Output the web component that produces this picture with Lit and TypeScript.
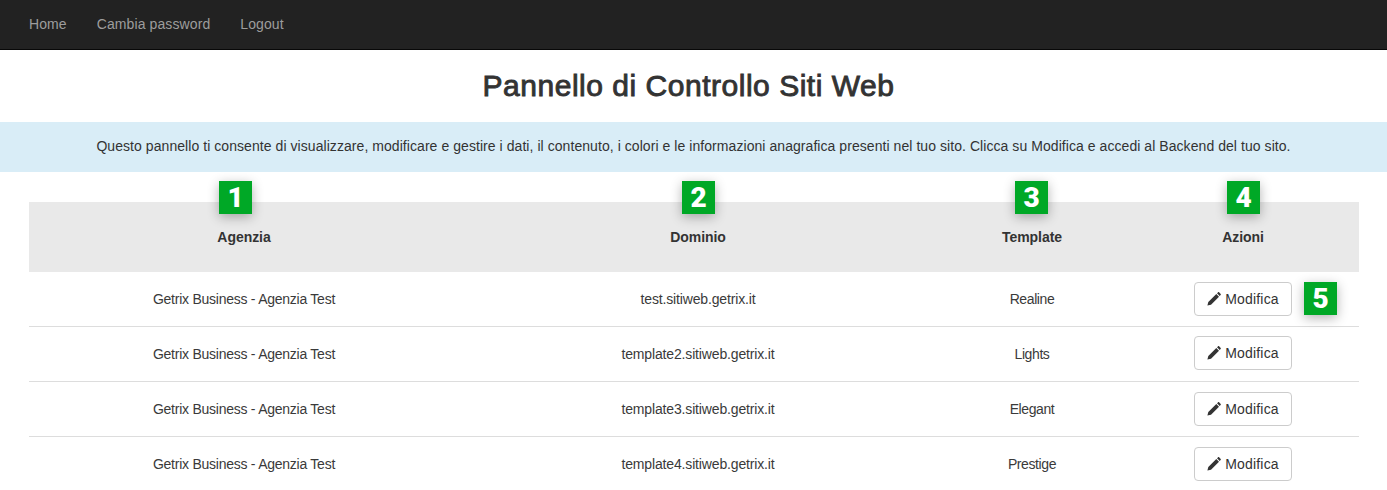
import { LitElement, html, css } from "lit";
import { customElement } from "lit/decorators.js";

const rows = [
  ["template-test", "test.sitiweb.getrix.it", "Realine"],
  ["template-2", "template2.sitiweb.getrix.it", "Lights"],
  ["template-3", "template3.sitiweb.getrix.it", "Elegant"],
  ["template-4", "template4.sitiweb.getrix.it", "Prestige"],
];

@customElement("app-root")
export class AppRoot extends LitElement {
  static styles = css`
    :host {
      display: block;
      height: 490px;
      overflow: hidden;
      background: #fff;
      color: #333;
      font-family: "Liberation Sans", Arial, sans-serif;
      font-size: 14px;
      line-height: 20px;
    }
    nav {
      display: flex;
      height: 49px;
      padding-left: 14px;
      background: #222;
      border-bottom: 1px solid #080808;
    }
    nav a {
      padding: 14px 15px 15px;
      color: #9d9d9d;
      text-decoration: none;
      letter-spacing: 0.1px;
    }
    h1 {
      margin: 0;
      padding: 20px 10px 0 0;
      height: 52px;
      line-height: 32px;
      font-size: 30px;
      font-weight: normal;
      -webkit-text-stroke: 0.9px #333;
      text-align: center;
      letter-spacing: 0.52px;
    }
    .alert {
      height: 50px;
      box-sizing: border-box;
      padding: 14px 15px 0;
      background: #d9edf7;
      text-align: center;
      color: #333;
      letter-spacing: 0.06px;
    }
    .wrap {
      padding: 30px 28px 0 29px;
    }
    table {
      width: 1330px;
      table-layout: fixed;
      border-collapse: collapse;
    }
    .c1 { width: 430px; }
    .c2 { width: 478px; }
    .c3 { width: 190px; }
    .c4 { width: 232px; }
    th {
      height: 70px;
      padding: 0;
      background: #e9e9e9;
      font-weight: bold;
      text-align: center;
      vertical-align: middle;
      position: relative;
      letter-spacing: -0.05px;
    }
    td {
      height: 54px;
      padding: 0;
      border-bottom: 1px solid #ddd;
      text-align: center;
      vertical-align: middle;
      position: relative;
      color: #3a3a3a;
    }
    .agency { letter-spacing: -0.25px; }
    .domain { letter-spacing: -0.15px; }
    .tpl { letter-spacing: -0.4px; }
    .btn {
      display: inline-flex;
      align-items: center;
      justify-content: center;
      gap: 4px;
      width: 98px;
      height: 34px;
      box-sizing: border-box;
      border: 1px solid #ccc;
      border-radius: 4px;
      background: #fff;
      color: #333;
      font-family: inherit;
      font-size: 14px;
      letter-spacing: 0.2px;
      padding: 0;
      vertical-align: middle;
    }
    .btn.up {
      margin-bottom: 2px;
    }
    .btn svg {
      width: 14px;
      height: 14px;
      fill: #333;
      flex: none;
    }
    .badge {
      position: absolute;
      width: 33px;
      height: 33px;
      display: flex;
      align-items: center;
      justify-content: center;
      background: #00a826;
      color: #fff;
      font-family: Roboto, "Liberation Sans", sans-serif;
      font-size: 28px;
      font-weight: 900;
      line-height: 33px;
      letter-spacing: 0;
      box-shadow: 0 3px 12px rgba(0, 0, 0, 0.3);
    }
    .b1 { left: 190px; top: -21px; }
    .b2 { left: 223px; top: -21px; }
    .b3 { left: 78px; top: -21px; }
    .b4 { left: 100px; top: -21px; }
    .b5 { left: 177px; top: 10px; }
  `;

  render() {
    return html`
      <nav>
        <a href="#">Home</a>
        <a href="#">Cambia password</a>
        <a href="#">Logout</a>
      </nav>
      <h1>Pannello di Controllo Siti Web</h1>
      <div class="alert">
        Questo pannello ti consente di visualizzare, modificare e gestire i dati, il contenuto, i colori e le informazioni anagrafica presenti nel tuo sito. Clicca su Modifica e accedi al Backend del tuo sito.
      </div>
      <div class="wrap">
        <table>
          <colgroup>
            <col class="c1" />
            <col class="c2" />
            <col class="c3" />
            <col class="c4" />
          </colgroup>
          <thead>
            <tr>
              <th>Agenzia<span class="badge b1">1</span></th>
              <th>Dominio<span class="badge b2">2</span></th>
              <th>Template<span class="badge b3">3</span></th>
              <th>Azioni<span class="badge b4">4</span></th>
            </tr>
          </thead>
          <tbody>
            ${rows.map(
              (r, i) => html`
                <tr>
                  <td class="agency">Getrix Business - Agenzia Test</td>
                  <td class="domain">${r[1]}</td>
                  <td class="tpl">${r[2]}</td>
                  <td>
                    <button class="btn ${i === 1 ? "up" : ""}">
                      <svg viewBox="0 0 14 14"><path d="M0.4 13.6 L1.3 10 L9.3 2 L12 4.7 L4 12.7 Z M10 1.3 L10.9 0.4 C11.3 0 11.8 0 12.1 0.3 L13.7 1.9 C14 2.2 14 2.7 13.6 3.1 L12.7 4 Z" /></svg>
                      Modifica
                    </button>
                    ${i === 0 ? html`<span class="badge b5">5</span>` : ""}
                  </td>
                </tr>
              `
            )}
          </tbody>
        </table>
      </div>
    `;
  }
}
